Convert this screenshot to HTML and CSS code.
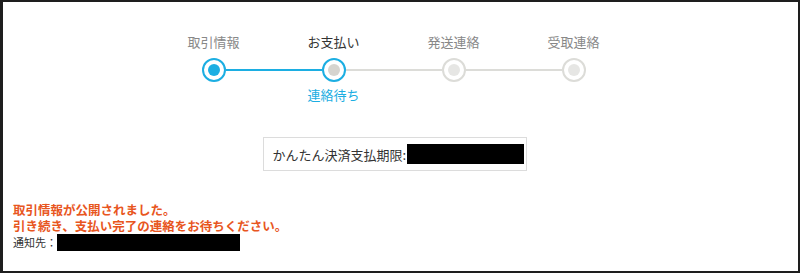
FILE: index.html
```html
<!DOCTYPE html>
<html lang="ja">
<head>
  <meta charset="UTF-8">
  <title>取引画面</title>
  <link rel="stylesheet" href="styles.css">
</head>
<body>
  <div class="frame">

    <!-- progress steps -->
    <div class="steps">
      <div class="step done">
        <div class="step-label">取引情報</div>
        <div class="step-track">
          <span class="line off"></span>
          <span class="dot"></span>
          <span class="line blue"></span>
        </div>
      </div>
      <div class="step current">
        <div class="step-label">お支払い</div>
        <div class="step-track">
          <span class="line blue"></span>
          <span class="dot"></span>
          <span class="line"></span>
        </div>
        <div class="step-sub">連絡待ち</div>
      </div>
      <div class="step">
        <div class="step-label">発送連絡</div>
        <div class="step-track">
          <span class="line"></span>
          <span class="dot"></span>
          <span class="line"></span>
        </div>
      </div>
      <div class="step">
        <div class="step-label">受取連絡</div>
        <div class="step-track">
          <span class="line"></span>
          <span class="dot"></span>
          <span class="line off"></span>
        </div>
      </div>
    </div>

    <div class="deadline-wrap">
      <div class="deadline">かんたん決済支払期限:<span class="redact redact-deadline"></span></div>
    </div>

    <div class="notice">
      <p class="notice-msg">取引情報が公開されました。</p>
      <p class="notice-msg">引き続き、支払い完了の連絡をお待ちください。</p>
      <p class="notice-to">通知先：<span class="redact redact-mail"></span></p>
    </div>

  </div>
</body>
</html>
```

FILE: styles.css
```css
body {
  margin: 0;
  padding: 0;
  background: #fff;
  font-family: "Noto Sans CJK JP", "Liberation Sans", sans-serif;
  color: #333;
}

.frame {
  width: 800px;
  height: 273px;
  box-sizing: border-box;
  border-style: solid;
  border-color: #1e1e1e;
  border-width: 2px 2px 2px 3px;
  background: #fff;
}

/* steps */
.steps {
  display: flex;
  justify-content: center;
  padding-top: 31px;
  padding-right: 14px;
  height: 106px;
  box-sizing: border-box;
}

.step {
  width: 120px;
  text-align: center;
}

.step-label {
  font-size: 13px;
  line-height: 18px;
  color: #888;
}

.step.current .step-label {
  color: #333;
}

.step-track {
  display: flex;
  align-items: center;
  height: 24px;
  margin-top: 7px;
}

.line {
  flex: 1;
  height: 2px;
  background: #dcdcd8;
}

.line.blue {
  background: #1caee2;
}

.line.off {
  background: transparent;
}

.dot {
  width: 24px;
  height: 24px;
  box-sizing: border-box;
  border-radius: 50%;
  border: 2px solid #dcdcd8;
  background: #fff;
  display: flex;
  align-items: center;
  justify-content: center;
}

.dot::after {
  content: "";
  width: 12px;
  height: 12px;
  border-radius: 50%;
  background: #e6e6e4;
}

.step.done .dot,
.step.current .dot {
  border-color: #1caee2;
}

.step.done .dot::after {
  background: #1caee2;
}

.step.current .dot::after {
  background: #d6d4cf;
}

.step-sub {
  font-size: 13px;
  line-height: 18px;
  margin-top: 4px;
  color: #1caee2;
}

/* deadline box */
.deadline-wrap {
  display: flex;
  justify-content: center;
  padding-right: 12px;
  margin-top: 29px;
}

.deadline {
  width: 264px;
  height: 34px;
  box-sizing: border-box;
  border: 1px solid #dcdcdc;
  padding: 0 0 0 9px;
  display: flex;
  align-items: center;
  font-size: 13px;
  color: #333;
}

.redact {
  display: inline-block;
  background: #000;
}

.redact-deadline {
  width: 117px;
  height: 20px;
  margin-left: 1px;
}

/* notice */
.notice {
  margin-top: 31px;
  padding-left: 10px;
}

.notice-msg {
  margin: 0;
  font-size: 12.5px;
  line-height: 16px;
  font-weight: bold;
  color: #e8561e;
}

.notice-to {
  margin: 0;
  font-size: 11px;
  line-height: 17px;
  display: flex;
  align-items: center;
  color: #333;
}

.redact-mail {
  width: 183px;
  height: 17px;
}
```
